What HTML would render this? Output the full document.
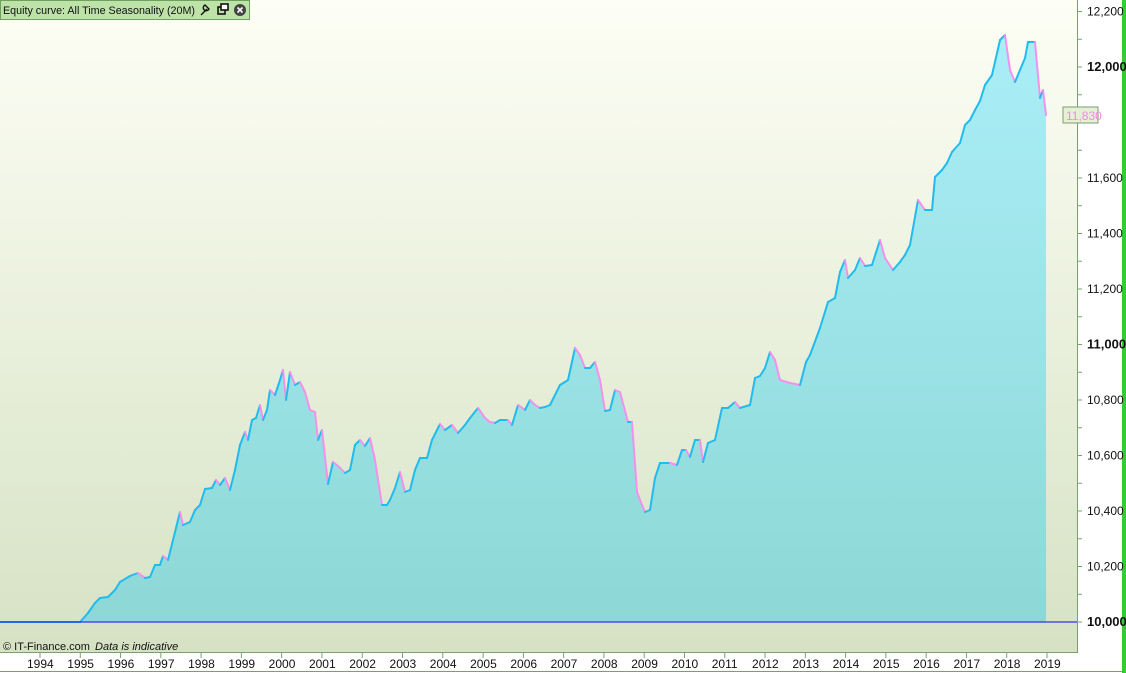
<!DOCTYPE html>
<html><head><meta charset="utf-8"><style>
html,body{margin:0;padding:0;width:1126px;height:673px;overflow:hidden;background:#fff;font-family:"Liberation Sans",sans-serif}
</style></head><body>
<svg id="s" width="1126" height="673" xmlns="http://www.w3.org/2000/svg" style="position:absolute;left:0;top:0">
<defs>
<linearGradient id="bg" x1="0" y1="0" x2="0" y2="1"><stop offset="0" stop-color="#fdfef5"/><stop offset="1" stop-color="#d6e2c4"/></linearGradient>
<linearGradient id="fl" x1="0" y1="0" x2="0" y2="1"><stop offset="0" stop-color="#aaeef7"/><stop offset="1" stop-color="#8dd8d6"/></linearGradient>
</defs>
<rect x="0" y="0" width="1077" height="652" fill="url(#bg)"/>
<path id="fill" fill="url(#fl)"/>
<g id="lines"></g>
<line x1="0" y1="622" x2="1077" y2="622" stroke="#3030ee" stroke-width="1.3"/>
<line x1="1077.5" y1="0" x2="1077.5" y2="653" stroke="#7aa070" stroke-width="1"/>
<line x1="0" y1="652.5" x2="1078" y2="652.5" stroke="#7aa070" stroke-width="1"/>
<line x1="0" y1="671.5" x2="1126" y2="671.5" stroke="#7aa070" stroke-width="1"/>
<rect x="1122" y="0" width="4" height="673" fill="#33cc33"/>
<g id="ax" font-size="12" fill="#111"></g>
<rect x="1063" y="107" width="35" height="16" fill="#e6f0d4" stroke="#7aa070"/>
<text x="1066" y="120" font-size="12" fill="#f08ae8">11,830</text>
<text x="3" y="650" font-size="11" fill="#111">© IT-Finance.com <tspan font-style="italic" dx="2">Data is indicative</tspan></text>
<rect x="0.5" y="0.5" width="249" height="19" fill="#bde3a8" stroke="#6fa060"/>
<text x="3" y="14" font-size="11" fill="#111" textLength="192" lengthAdjust="spacingAndGlyphs">Equity curve: All Time Seasonality (20M)</text>
<path d="M201 15 l6-6 M205 5 a3 3 0 1 0 4 4 l-2-2z" stroke="#111" stroke-width="1.4" fill="none"/>
<rect x="218" y="7" width="7" height="7" fill="none" stroke="#111" stroke-width="1.6"/><rect x="221" y="4" width="7" height="6" fill="#fff" stroke="#111" stroke-width="1.6"/>
<circle cx="240" cy="10" r="6" fill="#444"/><path d="M237.5 7.5l5 5M242.5 7.5l-5 5" stroke="#fff" stroke-width="1.6"/>
</svg>
<script>
var p=[[0,622],[80,622],[88,613],[95,603],[100,598],[108,597],[115,590],[120,582],[130,576],[138,573],[145,578],[150,577],[155,565],[160,565],[163,556],[168,560],[173,540],[180,512],[183,525],[190,522],[195,510],[200,505],[205,489],[212,488],[216,480],[220,485],[225,478],[230,490],[235,470],[240,445],[245,432],[248,440],[252,420],[256,418],[260,405],[263,420],[267,410],[270,390],[275,395],[280,380],[283,370],[286,400],[290,372],[295,385],[300,382],[305,392],[310,410],[315,412],[318,440],[322,430],[328,484],[333,462],[338,466],[345,473],[350,470],[355,445],[360,440],[365,446],[370,438],[375,460],[382,505],[387,505],[390,500],[395,488],[400,472],[405,492],[410,490],[415,470],[420,458],[427,458],[432,440],[440,424],[445,430],[452,425],[458,433],[465,425],[470,418],[478,408],[485,418],[490,422],[495,423],[500,420],[508,420],[512,425],[518,405],[525,410],[530,400],[535,405],[540,408],[545,407],[550,405],[560,385],[568,380],[575,348],[580,355],[585,368],[590,368],[595,362],[600,380],[605,411],[610,410],[615,390],[620,392],[628,422],[632,422],[637,492],[640,500],[645,512],[650,510],[655,478],[660,463],[670,463],[677,465],[682,450],[686,450],[690,457],[695,440],[700,440],[703,462],[708,443],[715,440],[722,408],[728,408],[735,402],[740,408],[750,405],[755,378],[760,376],[765,368],[770,352],[775,360],[780,380],[790,383],[800,385],[806,362],[810,355],[820,328],[828,302],[835,298],[840,272],[845,260],[848,278],[855,270],[860,258],[865,266],[872,265],[880,240],[885,258],[893,270],[900,262],[905,255],[910,245],[918,200],[925,210],[932,210],[935,177],[942,170],[947,163],[952,152],[960,143],[965,125],[970,120],[975,110],[980,101],[985,85],[992,75],[1000,40],[1005,35],[1010,70],[1015,82],[1020,70],[1025,58],[1028,42],[1035,42],[1040,98],[1043,90],[1046,115]];
var NS="http://www.w3.org/2000/svg";
var d="M"+p.map(function(a){return a.join(",")}).join(" L")+" L1046,622 L0,622Z";
document.getElementById("fill").setAttribute("d",d);
var g=document.getElementById("lines");
for(var i=1;i<p.length;i++){var l=document.createElementNS(NS,"line");l.setAttribute("x1",p[i-1][0]);l.setAttribute("y1",p[i-1][1]);l.setAttribute("x2",p[i][0]);l.setAttribute("y2",p[i][1]);l.setAttribute("stroke",p[i][1]>p[i-1][1]?"#f590ec":"#22bbee");l.setAttribute("stroke-width","2");l.setAttribute("stroke-linecap","round");g.appendChild(l);}
var ax=document.getElementById("ax");
function t(x,y,s,b){var e=document.createElementNS(NS,"text");e.setAttribute("x",x);e.setAttribute("y",y);if(b){e.setAttribute("font-weight","bold");e.setAttribute("font-size","13");}e.textContent=s;ax.appendChild(e);}
function ln(x1,y1,x2,y2){var e=document.createElementNS(NS,"line");e.setAttribute("x1",x1);e.setAttribute("y1",y1);e.setAttribute("x2",x2);e.setAttribute("y2",y2);e.setAttribute("stroke","#7aa070");ax.appendChild(e);}
for(var v=10000;v<=12200;v+=100){var y=622-(v-10000)*0.2775;ln(1077,y,1082,y);if(v%200==0){var s=(v/1000|0)+","+String(v%1000).padStart(3,"0");if(v==11800)continue;t(1087,y+4,s,v%1000==0);}}
for(var yr=1994;yr<=2019;yr++){var x=40+(yr-1994)*40.28;ln(x,653,x,658);t(x-13,668,String(yr));}
</script>
</body></html>
